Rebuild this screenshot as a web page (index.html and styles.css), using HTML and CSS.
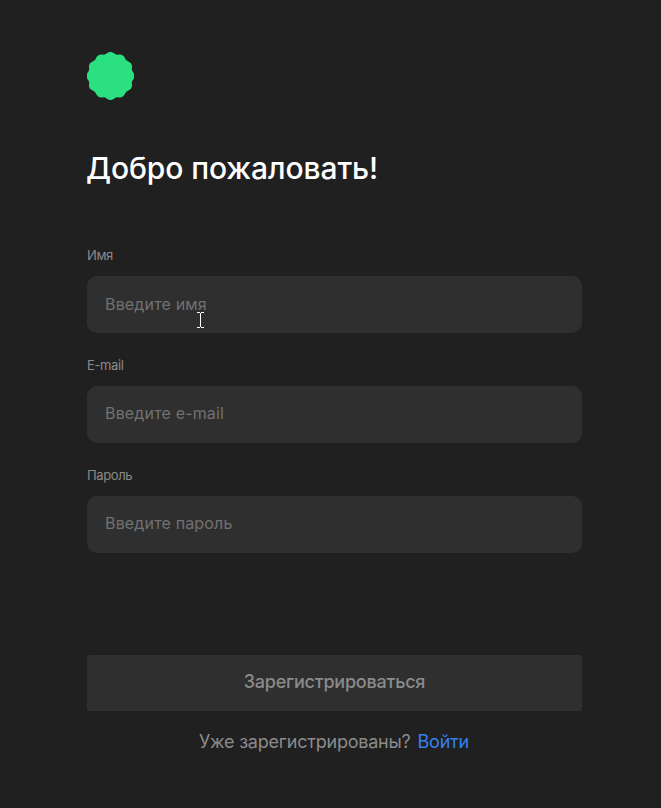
FILE: index.html
```html
<!DOCTYPE html>
<html lang="ru">
<head>
<meta charset="utf-8">
<title>Регистрация</title>
<link rel="stylesheet" href="styles.css">
</head>
<body>
<main class="register">
  <svg class="logo" viewBox="0.5 0 47 48" width="47" height="48" preserveAspectRatio="none" aria-hidden="true">
    <path fill="#2be080" d="M46.72 20.4A6 6 0 0 1 46.72 27.6A5 5 0 0 0 45.47 32.24A6 6 0 0 1 41.87 38.47A5 5 0 0 0 38.47 41.87A6 6 0 0 1 32.24 45.47A5 5 0 0 0 27.6 46.72A6 6 0 0 1 20.4 46.72A5 5 0 0 0 15.76 45.47A6 6 0 0 1 9.53 41.87A5 5 0 0 0 6.13 38.47A6 6 0 0 1 2.53 32.24A5 5 0 0 0 1.28 27.6A6 6 0 0 1 1.28 20.4A5 5 0 0 0 2.53 15.76A6 6 0 0 1 6.13 9.53A5 5 0 0 0 9.53 6.13A6 6 0 0 1 15.76 2.53A5 5 0 0 0 20.4 1.28A6 6 0 0 1 27.6 1.28A5 5 0 0 0 32.24 2.53A6 6 0 0 1 38.47 6.13A5 5 0 0 0 41.87 9.53A6 6 0 0 1 45.47 15.76A5 5 0 0 0 46.72 20.4Z"/>
  </svg>
  <h1 class="title">Добро пожаловать!</h1>
  <form class="form">
    <label class="field"><span class="label">Имя</span>
      <input class="input input_name" type="text" placeholder="Введите имя"></label>
    <label class="field"><span class="label">E-mail</span>
      <input class="input" type="email" placeholder="Введите e-mail"></label>
    <label class="field"><span class="label">Пароль</span>
      <input class="input" type="password" placeholder="Введите пароль"></label>
    <button class="submit" type="button">Зарегистрироваться</button>
  </form>
  <p class="hint"><span class="question">Уже зарегистрированы?</span><a class="link" href="#">Войти</a></p>
</main>
<svg class="cursor" width="7" height="16" viewBox="0 0 7 16" aria-hidden="true">
  <path fill="#fff" d="M0 0h3v1h1V0h3v1H4v14h3v1H4v-1H3v1H0v-1h3V1H0z"/>
</svg>
</body>
</html>
```
FILE: styles.css
```css
* { box-sizing: border-box; }
body {
  margin: 0;
  background: #202020;
  color: #fff;
  font-family: Inter, "Liberation Sans", sans-serif;
}
.register {
  width: 495px;
  height: 808px;
  margin-left: 87px;
  padding-top: 52px;
}
.logo { display: block; }
.title {
  margin: 50px 0 0 -1px;
  font-size: 30px;
  line-height: 36px;
  font-weight: 500;
  letter-spacing: -0.1px;
  white-space: nowrap;
}
.form {
  display: flex;
  flex-direction: column;
  gap: 25px;
  margin-top: 61px;
}
.field { display: block; height: 85px; }
.label {
  display: block;
  height: 29px;
  font-size: 13px;
  line-height: 16px;
  letter-spacing: -0.38px;
  color: #8b8b8b;
}
.input {
  display: block;
  width: 100%;
  height: 57px;
  padding: 0 18px 4px;
  border: 0;
  border-radius: 10px;
  background: #2f2f2f;
  color: #fff;
  font: 400 16px/20px Inter, sans-serif;
  letter-spacing: 0.16px;
}
.input_name { padding-bottom: 2px; }
.input::placeholder { color: #717171; opacity: 1; }
.submit {
  height: 56px;
  margin-top: 78px;
  padding: 0 0 3px;
  border: 0;
  border-radius: 3px;
  background: #2f2f2f;
  color: #8b8b8b;
  font: 500 18px/22px Inter, sans-serif;
  letter-spacing: -0.22px;
}
.hint {
  display: flex;
  justify-content: center;
  gap: 7px;
  margin: 20px 0.5px 0 -0.5px;
  font-size: 18px;
  line-height: 22px;
  letter-spacing: -0.22px;
  color: #8b8b8b;
}
.link { color: #3682ed; text-decoration: none; }
.cursor { position: absolute; left: 197px; top: 312px; }
```
